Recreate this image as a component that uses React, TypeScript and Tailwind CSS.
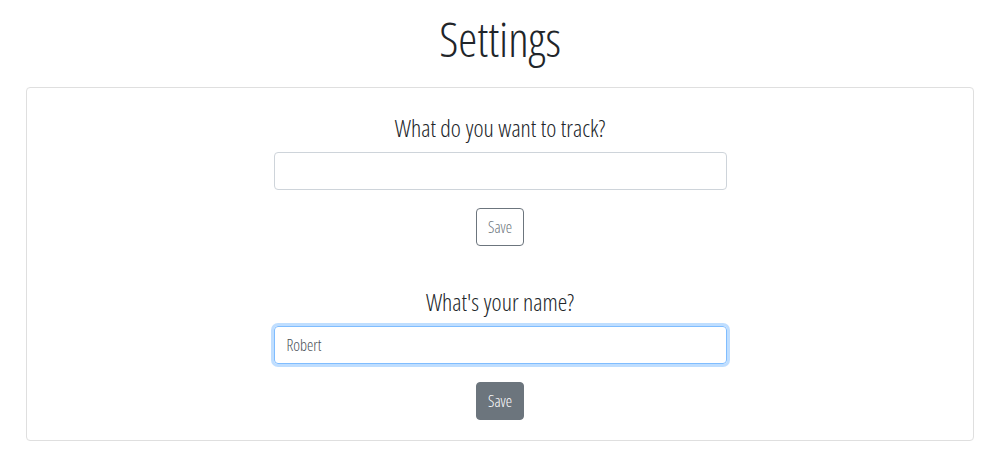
import { useState } from "react";

const font = "font-['Open_Sans',sans-serif] [font-stretch:condensed] font-light";

function Section({
  label,
  value,
  focused,
  solid,
}: {
  label: string;
  value: string;
  focused?: boolean;
  solid?: boolean;
}) {
  const [text, setText] = useState(value);
  return (
    <div className="flex flex-col items-center">
      <h4 className="text-[24px] leading-[29px] text-[#212529]">{label}</h4>
      <input
        value={text}
        onChange={(e) => setText(e.target.value)}
        className={
          focused
            ? "mt-[10px] h-[38px] w-[453px] rounded-[4px] border border-[#80bdff] px-3 text-[16px] text-[#495057] outline-none shadow-[0_0_0_3px_rgba(0,123,255,0.25)]"
            : "mt-[10px] h-[38px] w-[453px] rounded-[4px] border border-[#ced4da] px-3 text-[16px] text-[#495057] outline-none"
        }
      />
      <button
        className={
          solid
            ? "mt-[18px] h-[38px] w-[48px] rounded-[4px] border border-[#6c757d] bg-[#6c757d] text-[16px] text-white"
            : "mt-[18px] h-[38px] w-[48px] rounded-[4px] border border-[#6c757d] bg-white text-[16px] text-[#6c757d]"
        }
      >
        Save
      </button>
    </div>
  );
}

export default function App() {
  return (
    <div className={`min-h-[461px] bg-white pl-[26px] pr-[23px] ${font}`}>
      <h1 className="pt-[10px] text-center text-[48px] leading-[58px] text-[#212529]">Settings</h1>
      <div className="mt-[19px] flex flex-col gap-[41px] rounded-[4px] border border-[#dfdfdf] pt-[25px] pb-[20px]">
        <Section label="What do you want to track?" value="" />
        <Section label="What's your name?" value="Robert" focused solid />
      </div>
    </div>
  );
}
